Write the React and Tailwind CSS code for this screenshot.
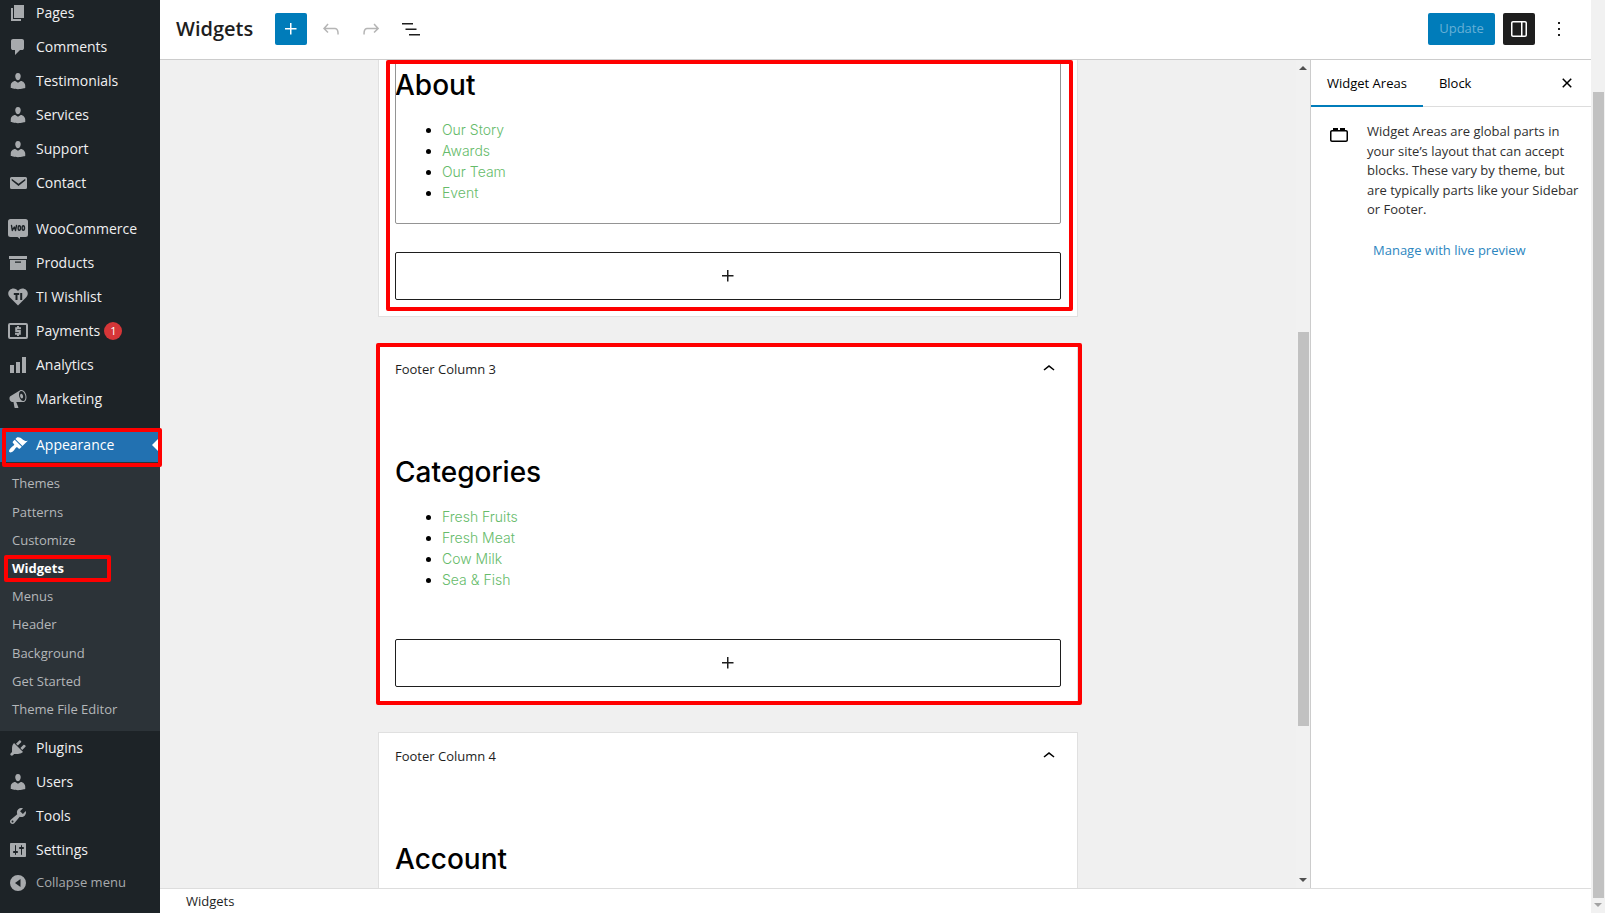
import clsx from 'clsx';

const ICONS = {
  page: 'M6 15V2h10v13H6zM5 16h8v2H3V5h2v11z',
  comment: 'M5 2h9q.82 0 1.41.59T16 4v7q0 .82-.59 1.41T14 13h-2l-5 5v-5H5q-.82 0-1.41-.59T3 11V4q0-.82.59-1.41T5 2z',
  user: 'M10 9.25c-2.27 0-2.73-3.44-2.73-3.44C7 4.02 7.82 2 9.97 2c2.16 0 2.98 2.02 2.71 3.81 0 0-.41 3.44-2.68 3.44zm0 2.57L12.72 10c2.39 0 4.52 2.33 4.52 4.53v2.49s-3.65 1.13-7.24 1.13c-3.65 0-7.24-1.13-7.24-1.13v-2.49c0-2.25 1.94-4.48 4.47-4.48z',
  email: 'M3.5 4h14A1.5 1.5 0 0 1 19 5.5v9a1.5 1.5 0 0 1-1.5 1.5h-14A1.5 1.5 0 0 1 2 14.5v-9A1.5 1.5 0 0 1 3.5 4zM3.7 5.7v1.9l6.8 5.3 6.8-5.3V5.7l-6.8 5z',
  archive: 'M1 3h18v3H1zM2 7h16v10H2zM7 8.5v1.3h6V8.5z',
  chart: 'M18 18V2h-4v16h4zm-6 0V7H8v11h4zm-6 0v-8H2v8h4z',
  megaphone: 'M18.15 5.94c.46 1.62.38 3.22-.02 4.48-.42 1.28-1.26 2.18-2.3 2.48-.16.06-.26.06-.4.06-.06.02-.12.02-.18.02-.06.02-.14.02-.22.02h-6.8l2.22 5.5c.02.14-.06.26-.14.34-.08.1-.24.16-.34.16H6.95c-.1 0-.26-.06-.34-.16-.08-.08-.16-.2-.14-.34l-1-5.5H4.25l-.02-.02c-.5.06-1.08-.18-1.54-.62s-.88-1.08-1.06-1.88c-.24-.8-.2-1.56-.02-2.2.18-.62.58-1.08 1.06-1.3l.02-.02 9-5.4c.1-.06.18-.1.24-.16.06-.04.14-.08.24-.12.16-.08.28-.12.5-.18 1.04-.3 2.24.1 3.22.98s1.84 2.24 2.26 3.86zm-2.58 5.98h-.02c.4-.1.74-.34 1.04-.7.58-.7.86-1.76.86-3.04 0-.64-.1-1.3-.28-1.98-.34-1.36-1.02-2.5-1.78-3.24s-1.68-1.1-2.46-.88c-.82.22-1.4.96-1.7 2-.32 1.04-.28 2.36.06 3.72.38 1.36 1 2.5 1.8 3.24.78.74 1.62 1.1 2.48.88zm-2.54-7.08c.22-.04.42-.02.62.04.38.16.76.48 1.02 1s.42 1.2.42 1.78c0 .3-.04.56-.12.8-.18.48-.44.84-.86.94-.34.1-.8-.06-1.14-.4s-.64-.86-.78-1.5c-.18-.62-.12-1.24.02-1.72s.48-.84.82-.94z',
  brush: 'M14.48 11.06L7.41 3.99l1.5-1.5c.5-.56 2.3-.47 3.51.32 1.21.8 1.43 1.28 2.91 2.1 1.18.64 2.45 1.26 4.45.85zm-.71.71L6.7 4.7 4.93 6.47c-.39.39-.39 1.02 0 1.41l1.06 1.06c.39.39.39 1.03 0 1.42-.6.6-1.43 1.11-2.21 1.69-.35.26-.7.53-1.01.84C1.43 14.23.4 16.08 1.4 17.07c.99 1 2.84-.03 4.18-1.36.31-.31.58-.66.85-1.02.57-.78 1.08-1.61 1.69-2.21.39-.39 1.02-.39 1.41 0l1.06 1.06c.39.39 1.02.39 1.41 0z',
  plug: 'M13.11 4.36L9.87 7.6 8 5.73l3.24-3.24c.35-.34 1.05-.2 1.56.32.52.51.66 1.21.31 1.55zm-8 1.77l.91-1.12 9.01 9.01-1.19.84c-.71.71-2.63 1.16-3.82 1.16H6.14L4.9 17.26c-.59.59-1.54.59-2.12 0-.59-.58-.59-1.53 0-2.12l1.24-1.24v-3.88c0-1.13.4-3.19 1.09-3.89zm7.26 3.97l3.24-3.24c.34-.35 1.04-.21 1.55.31.52.51.66 1.21.31 1.55l-3.24 3.25z',
  wrench: 'M16.68 9.77c-1.34 1.34-3.3 1.67-4.95.99l-5.41 6.52c-.99.99-2.59.99-3.58 0s-.99-2.59 0-3.57l6.52-5.42c-.68-1.65-.35-3.61.99-4.95 1.28-1.28 3.12-1.62 4.72-1.06l-2.89 2.89 2.82 2.82 2.86-2.87c.53 1.58.18 3.39-1.08 4.65zM3.81 16.21c.4.39 1.04.39 1.43 0 .4-.4.4-1.04 0-1.43-.39-.4-1.03-.4-1.43 0-.39.39-.39 1.03 0 1.43z',
  settings: 'M18 16V4c0-.55-.45-1-1-1H3c-.55 0-1 .45-1 1v12c0 .55.45 1 1 1h14c.55 0 1-.45 1-1zM8 11h1c.55 0 1 .45 1 1s-.45 1-1 1H8v1.5c0 .28-.22.5-.5.5s-.5-.22-.5-.5V13H6c-.55 0-1-.45-1-1s.45-1 1-1h1V5.5c0-.28.22-.5.5-.5s.5.22.5.5V11zm5-2h-1c-.55 0-1-.45-1-1s.45-1 1-1h1V5.5c0-.28.22-.5.5-.5s.5.22.5.5V7h1c.55 0 1 .45 1 1s-.45 1-1 1h-1v5.5c0 .28-.22.5-.5.5s-.5-.22-.5-.5V9z',
  collapse: 'M10 2a8 8 0 1 0 0 16 8 8 0 0 0 0-16zM12.5 6v8L7 10z',
};

const GLYPHS = {
  plus: 'M11 12.5V17.5H12.5V12.5H17.5V11H12.5V6H11V11H6V12.5H11Z',
  undo: 'M18.3 11.7c-.6-.6-1.4-.9-2.3-.9H6.7l2.9-3.3-1.1-1-4.5 5L8.5 16l1-1-2.7-2.7H16c.5 0 .9.2 1.3.5 1 1 1 3.4 1 4.5v.3h1.5v-.2c0-1.5 0-4.3-1.5-5.7z',
  redo: 'M15.6 6.5l-1.1 1 2.9 3.3H8c-.9 0-1.7.3-2.3.9-1.4 1.5-1.4 4.2-1.4 5.6v.2h1.5v-.3c0-1.1 0-3.5 1-4.5.3-.3.7-.5 1.3-.5h9.2L14.5 15l1.1 1.1 4.6-4.6-4.6-5z',
  listView: 'M3 6h11v1.5H3V6Zm3.5 5.5h11V13h-11v-1.5ZM21 17H10v1.5h11V17Z',
  drawer: 'M18 4H6c-1.1 0-2 .9-2 2v12c0 1.1.9 2 2 2h12c1.1 0 2-.9 2-2V6c0-1.1-.9-2-2-2zm-4 14.5H6c-.3 0-.5-.2-.5-.5V6c0-.3.2-.5.5-.5h8v13zm4.5-.5c0 .3-.2.5-.5.5h-2.5v-13H18c.3 0 .5.2.5.5v12z',
  more: 'M13 19h-2v-2h2v2zm0-6h-2v-2h2v2zm0-6h-2V5h2v2z',
  close: 'M12 13.06l3.712 3.713 1.061-1.06L13.061 12l3.712-3.712-1.06-1.06L12 10.938 8.288 7.227l-1.061 1.06L10.939 12l-3.712 3.712 1.06 1.061L12 13.061z',
  chevronUp: 'M6.5 12.4L12 8l5.5 4.4-.9 1.2L12 10l-4.5 3.6-1-1.2z',
  block: 'M19 8h-1V6h-5v2h-2V6H6v2H5c-1.1 0-2 .9-2 2v8c0 1.1.9 2 2 2h14c1.1 0 2-.9 2-2v-8c0-1.1-.9-2-2-2zm.5 10c0 .3-.2.5-.5.5H5c-.3 0-.5-.2-.5-.5v-8c0-.3.2-.5.5-.5h14c.3 0 .5.2.5.5v8z',
};

const MENU_TOP = [
  { icon: 'page', label: 'Pages' },
  { icon: 'comment', label: 'Comments' },
  { icon: 'user', label: 'Testimonials' },
  { icon: 'user', label: 'Services' },
  { icon: 'user', label: 'Support' },
  { icon: 'email', label: 'Contact' },
];

const MENU_SHOP = [
  { icon: 'woo', label: 'WooCommerce' },
  { icon: 'archive', label: 'Products' },
  { icon: 'wishlist', label: 'TI Wishlist' },
  { icon: 'payments', label: 'Payments', badge: 1 },
  { icon: 'chart', label: 'Analytics' },
  { icon: 'megaphone', label: 'Marketing' },
];

const MENU_BOTTOM = [
  { icon: 'plug', label: 'Plugins' },
  { icon: 'user', label: 'Users' },
  { icon: 'wrench', label: 'Tools' },
  { icon: 'settings', label: 'Settings' },
];

const SUBMENU = [
  'Themes', 'Patterns', 'Customize', 'Widgets', 'Menus',
  'Header', 'Background', 'Get Started', 'Theme File Editor',
];

function MenuIcon({ name }) {
  if (name === 'woo') {
    return (
      <svg viewBox="0 0 20 20" className="size-5 shrink-0" aria-hidden="true">
        <path fill="#a7aaad" d="M2.5 0h15A2.5 2.5 0 0 1 20 2.5v13a2.5 2.5 0 0 1-2.5 2.5H12v2l-2.5-2h-7A2.5 2.5 0 0 1 0 15.5v-13A2.5 2.5 0 0 1 2.5 0z" />
        <g fill="none" stroke="#1d2327" strokeWidth="1.4" strokeLinejoin="round" strokeLinecap="round">
          <path d="M3.5 6.5l.8 5 2-3.5 1.2 3.5 1-5" />
          <ellipse cx="11.3" cy="9" rx="1.2" ry="2.2" />
          <ellipse cx="15.3" cy="9" rx="1.2" ry="2.2" />
        </g>
      </svg>
    );
  }
  if (name === 'wishlist') {
    return (
      <svg viewBox="0 0 20 20" className="size-5 shrink-0" aria-hidden="true">
        <path fill="#a7aaad" d="M10 18.5L2 10.5C-2 6 1.5 1.5 5.5 1.5c2 0 3.5 1 4.5 2.5 1-1.5 2.5-2.5 4.5-2.5 4 0 7.5 4.500 3.500 9z" />
        <path fill="none" stroke="#1d2327" strokeWidth="2" d="M5.8 7h5.400M8.500 7v6M13.200 6v7" />
      </svg>
    );
  }
  if (name === 'payments') {
    return (
      <svg viewBox="0 0 20 20" className="size-5 shrink-0" aria-hidden="true">
        <g fill="none" stroke="#a7aaad">
          <rect x="1" y="3" width="18" height="14" rx="1" strokeWidth="2" />
          <path strokeWidth="2" d="M13 7.200H8.200V10h3.600v2.800H7M10 5v2M10 13v2" />
        </g>
      </svg>
    );
  }
  return (
    <svg viewBox="0 0 20 20" className="size-5 shrink-0" fill="currentColor" fillRule="evenodd" aria-hidden="true">
      <path d={ICONS[name]} />
    </svg>
  );
}

function Glyph({ name }) {
  return (
    <svg viewBox="0 0 24 24" className="size-6 shrink-0" fill="currentColor" aria-hidden="true">
      <path d={GLYPHS[name]} />
    </svg>
  );
}

function MenuItem({ icon, label, badge }) {
  return (
    <li>
      <a href="#" className="flex h-[34px] items-center gap-2 pl-2 text-[#a7aaad]">
        <MenuIcon name={icon} />
        <span className="text-sm text-[#f0f0f1]">{label}</span>
        {badge && (
          <span className="-ml-1 flex size-[18px] items-center justify-center rounded-full bg-[#d63638] text-[11px] text-white">
            {badge}
          </span>
        )}
      </a>
    </li>
  );
}

function AdminMenu() {
  return (
    <nav className="z-10 w-40 shrink-0 bg-[#1d2327]">
      <ul className="-mt-1">
        {MENU_TOP.map(item => <MenuItem key={item.label} {...item} />)}
      </ul>
      <ul className="mt-3">
        {MENU_SHOP.map(item => <MenuItem key={item.label} {...item} />)}
      </ul>
      <div className="relative mt-3">
        <a href="#" className="relative flex h-[34px] items-center gap-2 bg-[#2271b1] pl-2 text-sm text-white">
          <MenuIcon name="brush" />
          Appearance
          <span className="absolute right-0 top-[9px] border-y-8 border-r-8 border-y-transparent border-r-white" />
        </a>
        <span className="absolute -right-0.5 left-0.5 top-0 h-[39px] rounded-xs border-4 border-[#ff0000]" />
      </div>
      <ul className="flex h-[269px] flex-col bg-[#2c3338] pb-[7px] pt-2 text-[13px]">
        {SUBMENU.map(label => (
          <li key={label} className="relative flex flex-1 items-center">
            <a
              href="#"
              className={clsx('pl-3', label === 'Widgets' ? 'font-bold text-white' : 'text-[#b4b7ba]')}
            >
              {label}
            </a>
            {label === 'Widgets' && (
              <span className="absolute left-1 top-0 h-[27px] w-[107px] rounded-xs border-4 border-[#ff0000]" />
            )}
          </li>
        ))}
      </ul>
      <ul>
        {MENU_BOTTOM.map(item => <MenuItem key={item.label} {...item} />)}
      </ul>
      <button type="button" className="flex h-8 items-center gap-2 pl-2 text-[13px] text-[#a7aaad]">
        <MenuIcon name="collapse" />
        Collapse menu
      </button>
    </nav>
  );
}

function EditorHeader() {
  return (
    <header className="flex h-[60px] shrink-0 items-center border-b border-[#ccc] bg-white pb-px pl-4 pr-5">
      <h1 className="w-[99px] text-xl font-semibold text-[#1e1e1e]">Widgets</h1>
      <button type="button" aria-label="Add block" className="flex size-8 items-center justify-center rounded-xs bg-[#007cba] text-white">
        <Glyph name="plus" />
      </button>
      <div className="ml-3 flex gap-4 text-[#1e1e1e]">
        <button type="button" aria-label="Undo" className="text-[#b5b5b5]"><Glyph name="undo" /></button>
        <button type="button" aria-label="Redo" className="text-[#b5b5b5]"><Glyph name="redo" /></button>
        <button type="button" aria-label="List view"><Glyph name="listView" /></button>
      </div>
      <div className="ml-auto flex items-center gap-2">
        <button type="button" className="h-8 w-[67px] rounded-xs bg-[#007cba] text-[13px] text-[#66b0d6]">Update</button>
        <button type="button" aria-label="Settings" className="flex size-8 items-center justify-center rounded-xs bg-[#1e1e1e] text-white">
          <Glyph name="drawer" />
        </button>
        <button type="button" aria-label="Options" className="ml-1 text-[#1e1e1e]"><Glyph name="more" /></button>
      </div>
    </header>
  );
}

function WidgetList({ title, links }) {
  return (
    <>
      <h2 className="text-[28px] font-medium leading-[42px] text-black">{title}</h2>
      {links && (
        <ul className="mt-[13px] list-disc pl-[47px] text-sm font-light leading-[21px] text-black">
          {links.map(link => (
            <li key={link}><a href="#" className="text-[#66bb6a]">{link}</a></li>
          ))}
        </ul>
      )}
    </>
  );
}

function AddBlock() {
  return (
    <button type="button" aria-label="Add block" className="mt-7 flex h-12 w-full items-center justify-center rounded-xs border border-[#1e1e1e] text-[#1e1e1e]">
      <Glyph name="plus" />
    </button>
  );
}

function WidgetArea({ name, title, links, highlighted }) {
  return (
    <section className="relative border border-[#e0e0e0] bg-white px-4 pb-4">
      <div className="flex h-12 items-center justify-between">
        <h3 className="text-[13px] font-medium text-[#1e1e1e]">{name}</h3>
        <button type="button" aria-label="Collapse" className="pb-0.5"><Glyph name="chevronUp" /></button>
      </div>
      <div className="h-[217px] pt-[57px] font-['Inter',sans-serif]">
        <WidgetList title={title} links={links} />
      </div>
      <AddBlock />
      {highlighted && (
        <span className="pointer-events-none absolute -bottom-0.5 -left-[3px] -right-[5px] -top-[3px] rounded-xs border-4 border-[#ff0000]" />
      )}
    </section>
  );
}

function Scrollbar({ up, down, thumb }) {
  return (
    <div className="flex w-3.5 shrink-0 flex-col items-center bg-[#f1f1f1]">
      <div className="flex h-4 items-center">
        {up && <span className="border-x-4 border-b-4 border-x-transparent border-b-[#505050]" />}
      </div>
      <div className="flex w-full flex-1 flex-col items-center">{thumb}</div>
      <div className="flex h-4 items-center">
        <span className={clsx('border-x-4 border-t-4 border-x-transparent', down ? 'border-t-[#505050]' : 'border-t-[#a3a3a3]')} />
      </div>
    </div>
  );
}

function Canvas() {
  return (
    <main className="flex min-w-0 flex-1 overflow-hidden bg-[#f0f0f0]">
      <div className="flex-1 overflow-hidden">
        <div className="mx-auto flex max-w-[700px] flex-col gap-7">
          <section className="relative border border-t-0 border-[#e0e0e0] bg-white px-4 pb-4">
            <div className="h-[164px] rounded-b-xs pt-1 font-['Inter',sans-serif] outline outline-1 -outline-offset-1 outline-[#949494]">
              <WidgetList title="About" links={['Our Story', 'Awards', 'Our Team', 'Event']} />
            </div>
            <AddBlock />
            <span className="pointer-events-none absolute bottom-[5px] left-[7px] right-1 top-0 rounded-xs border-4 border-[#ff0000]" />
          </section>
          <WidgetArea
            name="Footer Column 3"
            title="Categories"
            links={['Fresh Fruits', 'Fresh Meat', 'Cow Milk', 'Sea & Fish']}
            highlighted
          />
          <WidgetArea name="Footer Column 4" title="Account" />
        </div>
      </div>
      <Scrollbar
        up
        down
        thumb={<div className="mt-64 h-[394px] w-[11px] bg-[#c1c1c1]" />}
      />
    </main>
  );
}

function SettingsPanel() {
  return (
    <aside className="w-[281px] shrink-0 border-l border-[#ccc] bg-white text-[13px]">
      <div className="flex h-[47px] items-stretch border-b border-[#ddd] font-medium text-black">
        <button type="button" className="-mb-px border-b-2 border-[#007cba] px-4 pt-0.5">Widget Areas</button>
        <button type="button" className="px-4 pt-0.5">Block</button>
        <button type="button" aria-label="Close settings" className="ml-auto mr-3"><Glyph name="close" /></button>
      </div>
      <div className="flex gap-4 pl-4 pr-2 pt-[15px] text-[#2f2f2f]">
        <span className="text-black"><Glyph name="block" /></span>
        <div>
          <p className="leading-[1.5]">
            Widget Areas are global parts in your site’s layout that can accept blocks. These vary by theme, but are typically parts like your Sidebar or Footer.
          </p>
          <a href="#" className="mt-[21px] inline-block px-1.5 text-[#2c86c0]">Manage with live preview</a>
        </div>
      </div>
    </aside>
  );
}

export default function App() {
  return (
    <div className="flex h-screen overflow-hidden bg-white font-['Open_Sans',sans-serif]">
      <AdminMenu />
      <div className="flex min-w-0 flex-1 flex-col">
        <EditorHeader />
        <div className="flex min-h-0 flex-1">
          <Canvas />
          <SettingsPanel />
        </div>
        <footer className="flex h-[25px] shrink-0 items-center border-t border-[#ddd] bg-white pl-[26px] pt-0.5 text-[13px] text-[#1e1e1e]">
          Widgets
        </footer>
      </div>
      <Scrollbar thumb={<div className="-mb-px mt-[76px] w-[11px] flex-1 bg-[#c1c1c1]" />} />
    </div>
  );
}
